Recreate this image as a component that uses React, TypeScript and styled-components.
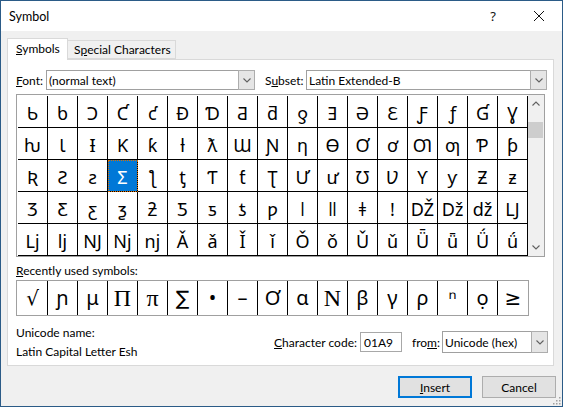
import styled, { createGlobalStyle } from "styled-components";

const GlobalStyle = createGlobalStyle`
  html, body { margin: 0; padding: 0; background: #f0f0f0; }
  body {
    font-family: Lato, "Noto Sans", sans-serif;
    font-size: 12px;
    color: #000;
  }
  * { box-sizing: border-box; }
`;

const Window = styled.div`
  position: relative;
  width: 563px;
  height: 407px;
  border: 1px solid #2b5b87;
  background: #f0f0f0;
  display: flex;
  flex-direction: column;
`;

const TitleBar = styled.div`
  height: 30px;
  background: #fff;
  display: flex;
  align-items: center;
  padding-left: 8px;
  flex-shrink: 0;
`;

const Title = styled.div`
  flex: 1;
  font-size: 12.5px;
`;

const CaptionButton = styled.div`
  width: 46px;
  height: 30px;
  display: flex;
  align-items: center;
  justify-content: center;
  font-family: "Noto Sans", sans-serif;
  font-size: 13px;
  color: #111;
`;

const Body = styled.div`
  padding: 7px 0 0 6px;
`;

const TabRow = styled.div`
  display: flex;
  align-items: flex-end;
  height: 21px;
`;

const Tab = styled.div<{ $active?: boolean; $w: number }>`
  position: relative;
  z-index: ${(p) => (p.$active ? 1 : 0)};
  height: ${(p) => (p.$active ? "22px" : "19px")};
  margin-bottom: ${(p) => (p.$active ? "-1px" : "0")};
  width: ${(p) => p.$w}px;
  background: ${(p) => (p.$active ? "#fff" : "#f0f0f0")};
  border: 1px solid #d9d9d9;
  border-bottom: ${(p) => (p.$active ? "none" : "1px solid #d9d9d9")};
  border-left: ${(p) => (p.$active ? "1px solid #d9d9d9" : "none")};
  display: flex;
  align-items: center;
  padding-left: ${(p) => (p.$active ? "8px" : "6px")};
  padding-bottom: ${(p) => (p.$active ? "2px" : "0")};
`;

const Panel = styled.div`
  width: 547px;
  height: 307px;
  background: #fff;
  border: 1px solid #d9d9d9;
  padding: 10px 5px 0 8px;
  display: flex;
  flex-direction: column;
`;

const Row = styled.div`
  display: flex;
  align-items: center;
  height: 20px;
`;

const Label = styled.label<{ $w?: number; $pl?: number }>`
  width: ${(p) => (p.$w ? `${p.$w}px` : "auto")};
  padding-left: ${(p) => p.$pl ?? 0}px;
  flex-shrink: 0;
  white-space: nowrap;
`;

const U = styled.span`
  text-decoration: underline;
`;

const Combo = styled.div<{ $w: number; $h?: number; $ml?: number }>`
  width: ${(p) => p.$w}px;
  height: ${(p) => p.$h ?? 20}px;
  margin-left: ${(p) => p.$ml ?? 0}px;
  border: 1px solid #a0a0a0;
  background: #fff;
  display: flex;
  align-items: stretch;
`;

const ComboText = styled.div`
  flex: 1;
  display: flex;
  align-items: center;
  padding-left: 2px;
  white-space: nowrap;
`;

const ComboArrow = styled.div`
  width: 17px;
  background: #e5e5e5;
  border: 1px solid #adadad;
  margin: -1px -1px -1px 0;
  display: flex;
  align-items: center;
  justify-content: center;
`;

const Chevron = ({ up }: { up?: boolean }) => (
  <svg width="8" height="5" viewBox="0 0 8 5">
    <path
      d={up ? "M0.5 4.5 L4 1 L7.5 4.5" : "M0.5 0.5 L4 4 L7.5 0.5"}
      fill="none"
      stroke="#606060"
      strokeWidth="1.1"
    />
  </svg>
);

const GridBox = styled.div`
  margin-top: 4px;
  width: 529px;
  height: 163px;
  border: 1px solid #a0a0a0;
  display: flex;
  padding: 1px 0 0 1px;
  background: #fff;
`;

const Cells = styled.div`
  display: grid;
  grid-template-columns: repeat(17, 30px);
  grid-auto-rows: 32px;
  width: 510px;
`;

const Cell = styled.div<{ $selected?: boolean }>`
  border-right: 1px solid #000;
  border-bottom: 1px solid #000;
  display: flex;
  align-items: center;
  justify-content: center;
  font-family: "Noto Sans", "DejaVu Sans", sans-serif;
  font-size: 18px;
  line-height: 1;
  padding-top: 2px;
  background: ${(p) => (p.$selected ? "#0078d7" : "#fff")};
  color: ${(p) => (p.$selected ? "#fff" : "#000")};
  outline: ${(p) => (p.$selected ? "1px dotted #e07000" : "none")};
  outline-offset: -1px;
`;

const Scrollbar = styled.div`
  width: 16px;
  background: #f0f0f0;
  display: flex;
  flex-direction: column;
  margin-top: -1px;
`;

const ScrollArrow = styled.div`
  height: 17px;
  display: flex;
  align-items: center;
  justify-content: center;
`;

const Track = styled.div`
  flex: 1;
`;

const Thumb = styled.div`
  margin: 10px 1px 0 0;
  height: 16px;
  background: #cdcdcd;
`;

const SectionLabel = styled.div`
  margin-top: 6px;
  height: 16px;
  line-height: 16px;
`;

const RecentBox = styled.div`
  margin-top: 1px;
  width: 513px;
  height: 36px;
  border: 1px solid #a0a0a0;
  padding-left: 1px;
  display: flex;
`;

const RecentCell = styled.div<{ $serif?: boolean; $last?: boolean }>`
  width: 30px;
  border-right: ${(p) => (p.$last ? "none" : "1px solid #000")};
  display: flex;
  align-items: center;
  justify-content: center;
  font-family: ${(p) =>
    p.$serif
      ? `"Liberation Serif", "DejaVu Serif", serif`
      : `"Noto Sans", "DejaVu Sans", sans-serif`};
  font-size: ${(p) => (p.$serif ? "24px" : "20px")};
  line-height: 1;
`;

const InfoRow = styled.div`
  margin-top: 9px;
  display: flex;
  align-items: center;
  justify-content: space-between;
`;

const InfoLeft = styled.div`
  display: flex;
  flex-direction: column;
  gap: 4px;
  line-height: 15px;
`;

const CodeGroup = styled.div`
  display: flex;
  align-items: center;
`;

const CodeInput = styled.div`
  width: 42px;
  height: 20px;
  margin: 0 10px 0 3px;
  border: 1px solid #a8a8a8;
  padding-left: 3px;
  display: flex;
  align-items: center;
  background: #fff;
`;

const Footer = styled.div`
  display: flex;
  justify-content: flex-end;
  gap: 10px;
  padding: 10px 6px 0 0;
`;

const Button = styled.div<{ $default?: boolean }>`
  width: 74px;
  height: 22px;
  background: #e1e1e1;
  border: ${(p) => (p.$default ? "2px solid #0078d7" : "1px solid #adadad")};
  display: flex;
  align-items: center;
  justify-content: center;
`;

const Grip = styled.svg`
  position: absolute;
  right: 1px;
  bottom: 1px;
`;

const symbols = Array.from({ length: 85 }, (_, i) =>
  String.fromCharCode(0x184 + i)
);

const recent: { ch: string; serif?: boolean }[] = [
  { ch: "√" },
  { ch: "ɲ" },
  { ch: "μ" },
  { ch: "Π", serif: true },
  { ch: "π", serif: true },
  { ch: "∑" },
  { ch: "•" },
  { ch: "–" },
  { ch: "Ơ" },
  { ch: "α" },
  { ch: "N", serif: true },
  { ch: "β" },
  { ch: "γ" },
  { ch: "ρ" },
  { ch: "ⁿ" },
  { ch: "ọ" },
  { ch: "≥" },
];

export default function App() {
  return (
    <>
      <GlobalStyle />
      <Window>
        <TitleBar>
          <Title>Symbol</Title>
          <CaptionButton>?</CaptionButton>
          <CaptionButton>
            <svg width="10" height="10" viewBox="0 0 10 10">
              <path d="M0 0 L10 10 M10 0 L0 10" stroke="#111" strokeWidth="1" />
            </svg>
          </CaptionButton>
        </TitleBar>
        <Body>
          <TabRow>
            <Tab $active $w={61}>
              <span>
                <U>S</U>ymbols
              </span>
            </Tab>
            <Tab $w={108}>
              <span>
                S<U>p</U>ecial Characters
              </span>
            </Tab>
          </TabRow>
          <Panel>
            <Row>
              <Label $w={30}>
                <U>F</U>ont:
              </Label>
              <Combo $w={209}>
                <ComboText>(normal text)</ComboText>
                <ComboArrow>
                  <Chevron />
                </ComboArrow>
              </Combo>
              <Label $w={51} $pl={10}>
                S<U>u</U>bset:
              </Label>
              <Combo $w={241}>
                <ComboText>Latin Extended-B</ComboText>
                <ComboArrow>
                  <Chevron />
                </ComboArrow>
              </Combo>
            </Row>

            <GridBox>
              <Cells>
                {symbols.map((s, i) => (
                  <Cell key={i} $selected={i === 37}>
                    {s}
                  </Cell>
                ))}
              </Cells>
              <Scrollbar>
                <ScrollArrow>
                  <Chevron up />
                </ScrollArrow>
                <Track>
                  <Thumb />
                </Track>
                <ScrollArrow>
                  <Chevron />
                </ScrollArrow>
              </Scrollbar>
            </GridBox>

            <SectionLabel>
              <U>R</U>ecently used symbols:
            </SectionLabel>
            <RecentBox>
              {recent.map((r, i) => (
                <RecentCell key={i} $serif={r.serif} $last={i === recent.length - 1}>
                  {r.ch}
                </RecentCell>
              ))}
            </RecentBox>

            <InfoRow>
              <InfoLeft>
                <div>Unicode name:</div>
                <div>Latin Capital Letter Esh</div>
              </InfoLeft>
              <CodeGroup>
                <Label>
                  <U>C</U>haracter code:
                </Label>
                <CodeInput>01A9</CodeInput>
                <Label>
                  fro<U>m</U>:
                </Label>
                <Combo $w={106} $h={22} $ml={2}>
                  <ComboText>Unicode (hex)</ComboText>
                  <ComboArrow>
                    <Chevron />
                  </ComboArrow>
                </Combo>
              </CodeGroup>
            </InfoRow>
          </Panel>
        </Body>
        <Footer>
          <Button $default>
            <span>
              <U>I</U>nsert
            </span>
          </Button>
          <Button>Cancel</Button>
        </Footer>
        <Grip width="10" height="10" viewBox="0 0 10 10">
          {[
            [8, 2],
            [8, 5],
            [5, 5],
            [8, 8],
            [5, 8],
            [2, 8],
          ].map(([x, y], i) => (
            <rect key={i} x={x} y={y} width="1.5" height="1.5" fill="#a0a0a0" />
          ))}
        </Grip>
      </Window>
    </>
  );
}
